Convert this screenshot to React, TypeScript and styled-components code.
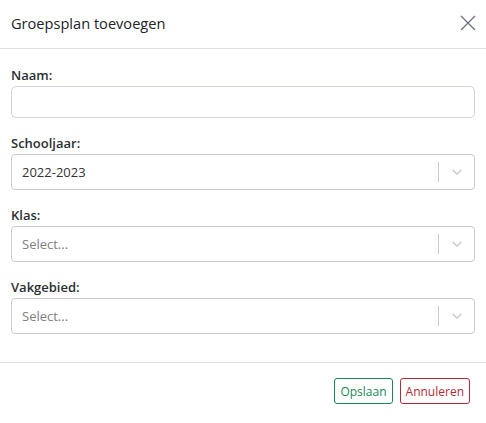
import styled, { createGlobalStyle } from "styled-components";

const GlobalStyle = createGlobalStyle`
  html, body {
    margin: 0;
    padding: 0;
    background: #ffffff;
    font-family: "Open Sans", "Noto Sans", sans-serif;
    color: #212529;
  }
  * { box-sizing: border-box; }
`;

const Modal = styled.div`
  width: 486px;
  background: #fff;
`;

const Header = styled.div`
  display: flex;
  align-items: center;
  justify-content: space-between;
  height: 49px;
  padding: 0 8px 2px 11px;
  border-bottom: 1px solid #dee2e6;
`;

const Title = styled.h5`
  margin: 0;
  font-size: 14.6px;
  font-weight: 400;
  line-height: 22px;
  color: #212529;
`;

const CloseButton = styled.button`
  display: flex;
  align-items: center;
  justify-content: center;
  width: 20px;
  height: 20px;
  padding: 0;
  border: none;
  background: transparent;
  color: #6c757d;
  cursor: pointer;
`;

const Body = styled.div`
  display: flex;
  flex-direction: column;
  gap: 15px;
  padding: 16px 11px 28px;
  border-bottom: 1px solid #dee2e6;
`;

const Field = styled.div`
  display: flex;
  flex-direction: column;
  gap: 1px;
`;

const Label = styled.label`
  font-size: 13px;
  font-weight: 600;
  line-height: 20px;
  color: #2b2f33;
`;

const TextInput = styled.input`
  height: 32px;
  width: 100%;
  border: 1px solid #ced4da;
  border-radius: 5px;
  padding: 0 10px;
  font: inherit;
  font-size: 13px;
`;

const SelectBox = styled.div`
  display: flex;
  align-items: center;
  height: 36px;
  border: 1px solid #cccccc;
  border-radius: 4px;
`;

const SelectValue = styled.div<{ $placeholder?: boolean }>`
  flex: 1;
  padding: 0 10px;
  font-size: 13px;
  color: ${({ $placeholder }) => ($placeholder ? "#808080" : "#333333")};
`;

const Separator = styled.span`
  width: 1px;
  height: 20px;
  background: #cccccc;
`;

const Indicator = styled.div`
  display: flex;
  align-items: center;
  justify-content: center;
  width: 35px;
  color: #cccccc;
`;

const Footer = styled.div`
  display: flex;
  justify-content: flex-end;
  gap: 7px;
  padding: 15px 16px;
`;

const Button = styled.button<{ $tone: "success" | "danger" }>`
  height: 26px;
  padding: 0 5px;
  border-radius: 3px;
  background: #fff;
  font-family: inherit;
  font-size: 12px;
  border: 1px solid ${({ $tone }) => ($tone === "success" ? "#198754" : "#b02a37")};
  color: ${({ $tone }) => ($tone === "success" ? "#198754" : "#b02a37")};
  cursor: pointer;
`;

const Chevron = () => (
  <svg width="12" height="12" viewBox="0 0 12 12" fill="none" stroke="currentColor" strokeWidth="1.6">
    <path d="M1.5 4L6 8L10.5 4" />
  </svg>
);

const Select = ({ value, placeholder }: { value?: string; placeholder?: string }) => (
  <SelectBox>
    <SelectValue $placeholder={!value}>{value ?? placeholder}</SelectValue>
    <Separator />
    <Indicator>
      <Chevron />
    </Indicator>
  </SelectBox>
);

export default function App() {
  return (
    <>
      <GlobalStyle />
      <Modal>
        <Header>
          <Title>Groepsplan toevoegen</Title>
          <CloseButton aria-label="Sluiten">
            <svg width="16" height="16" viewBox="0 0 16 16" stroke="currentColor" strokeWidth="1.4">
              <path d="M1 1L15 15M15 1L1 15" />
            </svg>
          </CloseButton>
        </Header>
        <Body>
          <Field>
            <Label>Naam:</Label>
            <TextInput />
          </Field>
          <Field>
            <Label>Schooljaar:</Label>
            <Select value="2022-2023" />
          </Field>
          <Field>
            <Label>Klas:</Label>
            <Select placeholder="Select..." />
          </Field>
          <Field>
            <Label>Vakgebied:</Label>
            <Select placeholder="Select..." />
          </Field>
        </Body>
        <Footer>
          <Button $tone="success">Opslaan</Button>
          <Button $tone="danger">Annuleren</Button>
        </Footer>
      </Modal>
    </>
  );
}
